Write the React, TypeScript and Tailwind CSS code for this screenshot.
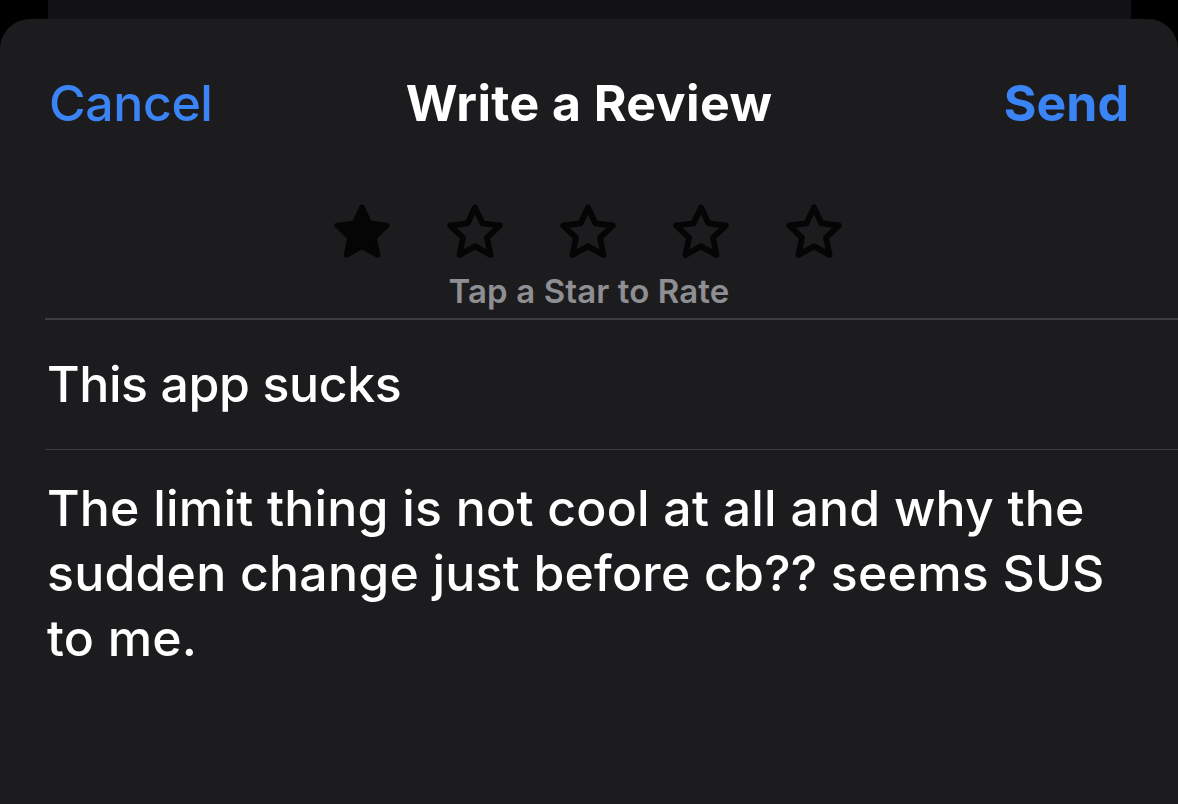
import React from "react";

const Star = ({ filled }: { filled?: boolean }) => (
  <svg width="64" height="64" viewBox="0 0 24 24" className="block">
    <path
      d="M12 2.4 L14.8 8.4 L21.3 9.2 L16.5 13.7 L17.8 20.2 L12 17 L6.2 20.2 L7.5 13.7 L2.7 9.2 L9.2 8.4 Z"
      fill={filled ? "#050505" : "none"}
      stroke="#050505"
      strokeWidth={filled ? 2.1 : 2.2}
      strokeLinejoin="round"
    />
  </svg>
);

export default function App() {
  return (
    <div
      className="w-[1178px] h-[804px] bg-black overflow-hidden relative"
      style={{ fontFamily: "Inter, 'Noto Sans', sans-serif" }}
    >
      <div className="absolute left-[48px] right-[47px] top-[-40px] h-[120px] rounded-[36px] bg-[#121214]" />
      <div className="absolute left-0 right-0 top-[19px] bottom-[-40px] rounded-t-[30px] bg-[#1c1c1e] flex flex-col">
        <div className="grid grid-cols-[1fr_auto_1fr] items-center pl-[49px] pr-[49px] pt-[52px] h-[116px]">
          <span className="justify-self-start text-[#3b84f5] text-[50px] font-medium tracking-[-0.4px] leading-none">Cancel</span>
          <span className="text-white text-[50px] font-bold tracking-[0.4px] leading-none">Write a Review</span>
          <span className="justify-self-end text-[#3b84f5] text-[50px] font-bold tracking-[0px] leading-none">Send</span>
        </div>
        <div className="flex flex-col items-center mt-[66px]">
          <div className="flex gap-[49px] ml-[-3px]">
            <Star filled />
            <Star />
            <Star />
            <Star />
            <Star />
          </div>
          <div className="text-[#8e8e93] text-[33px] font-semibold leading-none mt-[10px] tracking-[0.1px]">
            Tap a Star to Rate
          </div>
        </div>
        <div className="ml-[45px] mt-[10px] h-[1.5px] bg-[#3d3d40]" />
        <div className="ml-[47px] h-[129px] flex items-center text-white text-[50px] font-medium tracking-[-0.4px]">
          This app sucks
        </div>
        <div className="ml-[45px] h-[1.5px] bg-[#3d3d40]" />
        <div className="ml-[47px] mr-[60px] mt-[26px] text-white text-[50px] font-medium leading-[65px] tracking-[0.2px]">
          The limit thing is not cool at all and why the sudden change just before cb?? seems SUS to me.
        </div>
      </div>
    </div>
  );
}
